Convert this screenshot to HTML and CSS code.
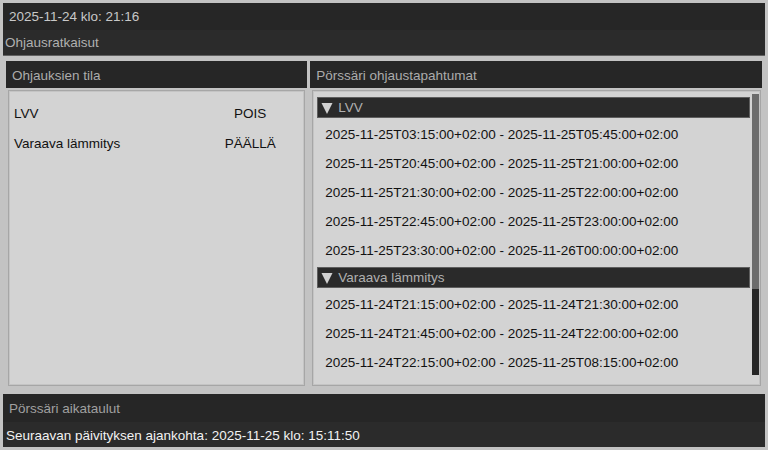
FILE: index.html
```html
<!DOCTYPE html>
<html lang="fi">
<head>
<meta charset="utf-8">
<title>Pörssäri</title>
<link rel="stylesheet" href="styles.css">
</head>
<body>
<div class="app">
  <div class="topbar">2025-11-24 klo: 21:16</div>
  <div class="subbar">Ohjausratkaisut</div>
  <div class="panels">
    <section class="panel panel-left">
      <div class="panel-head">Ohjauksien tila</div>
      <div class="box">
        <div class="state-row"><span class="name">LVV</span><span class="state">POIS</span></div>
        <div class="state-row"><span class="name">Varaava lämmitys</span><span class="state">PÄÄLLÄ</span></div>
      </div>
    </section>
    <section class="panel panel-right">
      <div class="panel-head">Pörssäri ohjaustapahtumat</div>
      <div class="box box-events">
        <div class="scroller">
          <div class="scroll-content">
            <div class="group">
              <div class="group-head"><svg class="tri" width="12" height="12" viewBox="0 0 12 12"><polygon points="0.5,1 11.5,1 6,12" fill="#d0d0d0"/></svg>LVV</div>
              <ul class="events">
                <li>2025-11-25T03:15:00+02:00 - 2025-11-25T05:45:00+02:00</li>
                <li>2025-11-25T20:45:00+02:00 - 2025-11-25T21:00:00+02:00</li>
                <li>2025-11-25T21:30:00+02:00 - 2025-11-25T22:00:00+02:00</li>
                <li>2025-11-25T22:45:00+02:00 - 2025-11-25T23:00:00+02:00</li>
                <li>2025-11-25T23:30:00+02:00 - 2025-11-26T00:00:00+02:00</li>
              </ul>
            </div>
            <div class="group">
              <div class="group-head"><svg class="tri" width="12" height="12" viewBox="0 0 12 12"><polygon points="0.5,1 11.5,1 6,12" fill="#d0d0d0"/></svg>Varaava lämmitys</div>
              <ul class="events">
                <li>2025-11-24T21:15:00+02:00 - 2025-11-24T21:30:00+02:00</li>
                <li>2025-11-24T21:45:00+02:00 - 2025-11-24T22:00:00+02:00</li>
                <li>2025-11-24T22:15:00+02:00 - 2025-11-25T08:15:00+02:00</li>
              </ul>
            </div>
          </div>
          <div class="scrollbar"><div class="thumb"></div></div>
        </div>
      </div>
    </section>
  </div>
  <div class="bottom-head">Pörssäri aikataulut</div>
  <div class="bottom-info">Seuraavan päivityksen ajankohta: 2025-11-25 klo: 15:11:50</div>
</div>
</body>
</html>
```
FILE: styles.css
```css
html, body {
  margin: 0;
  padding: 0;
}
body {
  background: #c3c3c3;
  font-family: "Liberation Sans", Arial, sans-serif;
  font-size: 13.5px;
  color: #111;
}
.app {
  box-sizing: border-box;
  width: 768px;
  height: 450px;
  padding: 3px;
  display: flex;
  flex-direction: column;
}
.topbar {
  height: 27px;
  line-height: 28px;
  background: #262626;
  color: #c8c8c8;
  padding-left: 6px;
}
.subbar {
  height: 25px;
  line-height: 26px;
  background: #2b2b2b;
  color: #b0b0b0;
  padding-left: 2px;
  border-bottom: 1px solid #606060;
}
.panels {
  display: flex;
  gap: 3px;
  padding: 5px 3px 0;
  height: 328px;
}
.panel {
  display: flex;
  flex-direction: column;
  min-width: 0;
}
.panel-left { flex: 2; }
.panel-right { flex: 3; }
.panel-head {
  height: 27px;
  line-height: 29px;
  background: #262626;
  color: #acacac;
  padding-left: 6px;
}
.box {
  flex: 1;
  margin: 2px 2px 3px;
  background: #d3d3d3;
  border: 1px solid #a6a6a6;
  box-shadow: inset 0 0 0 1px #c4c4c4;
  padding: 1px;
}
.panel-left .box {
  padding: 8px 4px 0 5px;
}
.state-row {
  display: grid;
  grid-template-columns: 1fr 100px;
  height: 30px;
  line-height: 30px;
}
.state {
  text-align: center;
}
.panel-right .box {
  margin-right: 1px;
  padding: 3px 1px 9px 2px;
}
.scroller {
  height: 281px;
  display: flex;
}
.scroll-content {
  flex: 1;
  min-width: 0;
  overflow: hidden;
  padding-top: 3px;
}
.scrollbar {
  width: 7px;
  flex: none;
  background: #262626;
}
.thumb {
  height: 195px;
  background: #6b6b6b;
}
.group-head {
  height: 21px;
  box-sizing: border-box;
  margin: 0 2px 0 2px;
  background: #2a2a2a;
  border: 1px solid #5e5e5e;
  color: #b0b0b0;
  line-height: 19px;
  padding-left: 3px;
  display: flex;
  align-items: center;
}
.tri {
  margin-right: 5px;
  flex: none;
}
.events {
  list-style: none;
  margin: 0;
  padding: 2px 0 2px 10px;
  font-size: 13.5px;
}
.events li {
  height: 29px;
  line-height: 30px;
  white-space: nowrap;
}
.bottom-head {
  margin-top: 5px;
  height: 28px;
  line-height: 29px;
  background: #262626;
  color: #a0a0a0;
  padding-left: 6px;
}
.bottom-info {
  height: 25px;
  line-height: 27px;
  background: #2b2b2b;
  color: #f2f2f2;
  padding-left: 3px;
}
```
